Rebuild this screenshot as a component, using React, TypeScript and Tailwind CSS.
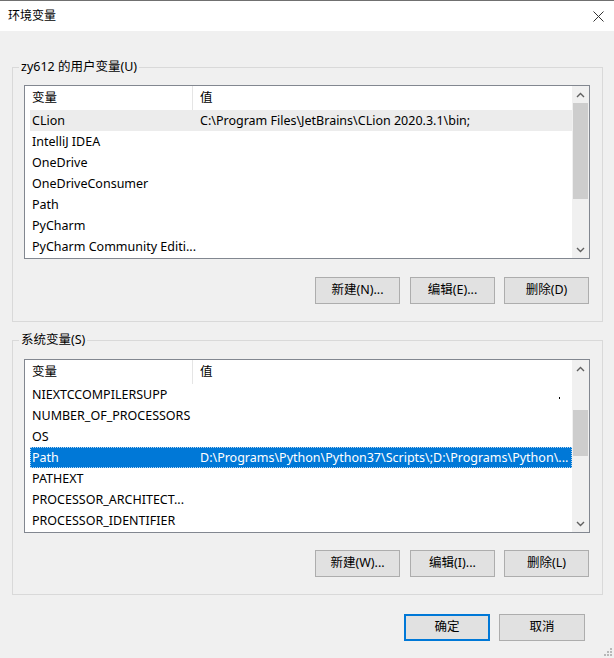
import React from "react";

const FONT = "font-['Noto_Sans','Noto_Sans_CJK_SC',sans-serif]";

interface Row {
  name: string;
  value?: string;
  state?: "inactive" | "active";
  dot?: boolean;
}

const userRows: Row[] = [
  { name: "CLion", value: "C:\\Program Files\\JetBrains\\CLion 2020.3.1\\bin;", state: "inactive" },
  { name: "IntelliJ IDEA" },
  { name: "OneDrive" },
  { name: "OneDriveConsumer" },
  { name: "Path" },
  { name: "PyCharm" },
  { name: "PyCharm Community Editi..." },
];

const systemRows: Row[] = [
  { name: "NIEXTCCOMPILERSUPP", dot: true },
  { name: "NUMBER_OF_PROCESSORS" },
  { name: "OS" },
  {
    name: "Path",
    value: "D:\\Programs\\Python\\Python37\\Scripts\\;D:\\Programs\\Python\\...",
    state: "active",
  },
  { name: "PATHEXT" },
  { name: "PROCESSOR_ARCHITECT..." },
  { name: "PROCESSOR_IDENTIFIER" },
];

const Chevron = ({ up }: { up?: boolean }) => (
  <svg width="9" height="6" viewBox="0 0 9 6">
    <path
      d={up ? "M1 5 L4.5 1.5 L8 5" : "M1 1 L4.5 4.5 L8 1"}
      fill="none"
      stroke="#606060"
      strokeWidth="1.4"
    />
  </svg>
);

const ListView = ({
  rows,
  thumbTop,
  thumbHeight,
}: {
  rows: Row[];
  thumbTop: number;
  thumbHeight: number;
}) => (
  <div className="flex h-[174px] w-[566px] overflow-hidden border border-[#828790] bg-white">
    <div className="flex-1 pl-[5px]">
      <div className="flex h-[24px] items-center">
        <div className="flex h-full w-[163px] items-center border-r border-[#e5e5e5] pl-[2px]">
          变量
        </div>
        <div className="pl-[7px]">值</div>
      </div>
      {rows.map((r) => (
        <div
          key={r.name}
          className={
            "relative flex h-[21px] items-center whitespace-nowrap pt-px " +
            (r.state === "inactive"
              ? "bg-[#ececec]"
              : r.state === "active"
                ? "bg-[#0078d7] text-white outline outline-1 -outline-offset-1 outline-dotted outline-[#b7d6f1]"
                : "")
          }
        >
          <div className="w-[163px] shrink-0 pl-[2px]">{r.name}</div>
          {r.value && <div className="pl-[7px]">{r.value}</div>}
          {r.dot && (
            <span className="absolute right-[12px] top-[13px] h-[1.5px] w-[1.5px] bg-black" />
          )}
        </div>
      ))}
    </div>
    <div className="relative flex w-[17px] flex-col bg-[#f0f0f0]">
      <div className="flex h-[17px] items-center justify-center">
        <Chevron up />
      </div>
      <div
        className="absolute left-[1px] w-[15px] bg-[#cdcdcd]"
        style={{ top: thumbTop, height: thumbHeight }}
      />
      <div className="flex-1" />
      <div className="flex h-[17px] items-center justify-center">
        <Chevron />
      </div>
    </div>
  </div>
);

const Button = ({
  label,
  w = "w-[85px]",
  primary,
}: {
  label: string;
  w?: string;
  primary?: boolean;
}) => (
  <button
    className={
      "flex h-[27px] items-center justify-center bg-[#e1e1e1] " +
      w +
      (primary
        ? " border-2 border-[#0078d7]"
        : " border border-[#adadad]")
    }
  >
    {label}
  </button>
);

const Group = ({
  title,
  children,
  className,
}: {
  title: string;
  children: React.ReactNode;
  className: string;
}) => (
  <fieldset
    className={
      "ml-[12px] w-[591px] border border-[#d9d9d9] pb-[17px] pl-[11px] " +
      className
    }
  >
    <legend className="-ml-[5px] h-[16px] px-[2px] leading-[16px]">{title}</legend>
    {children}
  </fieldset>
);

export default function App() {
  return (
    <div
      className={
        "relative flex h-[658px] w-[614px] flex-col overflow-hidden border-t border-[#707070] bg-[#f0f0f0] text-[12.5px] text-black " +
        FONT
      }
    >
      <div className="flex h-[30px] shrink-0 items-center justify-between bg-white pl-[8px] pr-[10px] text-[12px]">
        <span>环境变量</span>
        <svg width="11" height="11" viewBox="0 0 11 11">
          <path d="M0.5 0.5 L10.5 10.5 M10.5 0.5 L0.5 10.5" stroke="#333" strokeWidth="1" />
        </svg>
      </div>

      <Group title="zy612 的用户变量(U)" className="mt-[28px]">
        <div className="mt-[10px]">
          <ListView rows={userRows} thumbTop={17} thumbHeight={96} />
        </div>
        <div className="mt-[18px] flex w-[566px] justify-end gap-[10px] pr-[1px]">
          <Button label="新建(N)..." />
          <div className="flex gap-[9px]">
            <Button label="编辑(E)..." />
            <Button label="删除(D)" />
          </div>
        </div>
      </Group>

      <Group title="系统变量(S)" className="mt-[10px]">
        <div className="mt-[11px]">
          <ListView rows={systemRows} thumbTop={50} thumbHeight={46} />
        </div>
        <div className="mt-[17px] flex w-[566px] justify-end gap-[10px] pr-[1px]">
          <Button label="新建(W)..." />
          <div className="flex gap-[9px]">
            <Button label="编辑(I)..." />
            <Button label="删除(L)" />
          </div>
        </div>
      </Group>

      <div className="mt-[19px] flex justify-end gap-[9px] pr-[29px]">
        <Button label="确定" w="w-[86px]" primary />
        <Button label="取消" w="w-[86px]" />
      </div>

      <svg className="absolute bottom-[2px] right-[2px]" width="10" height="10" viewBox="0 0 10 10">
        {[
          [8, 2],
          [5, 5],
          [8, 5],
          [2, 8],
          [5, 8],
          [8, 8],
        ].map(([x, y]) => (
          <rect key={`${x}-${y}`} x={x} y={y} width="2" height="2" fill="#b8b8b8" />
        ))}
      </svg>
    </div>
  );
}
